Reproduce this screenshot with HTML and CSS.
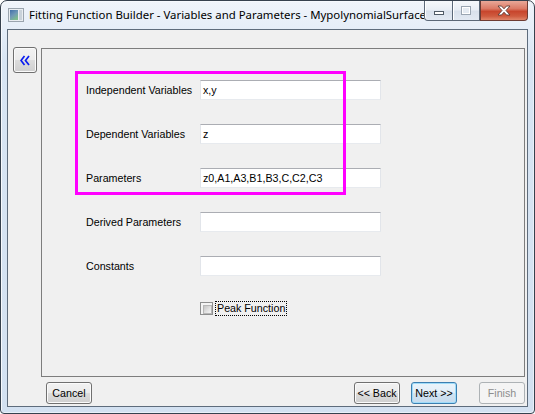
FILE: index.html
```html
<!DOCTYPE html>
<html>
<head>
<meta charset="utf-8">
<title>Fitting Function Builder</title>
<link rel="stylesheet" href="styles.css">
</head>
<body>
<div class="window">
  <div class="titlebar">
    <svg class="app-icon" width="16" height="14" viewBox="0 0 16 14">
      <defs>
        <linearGradient id="ig" x1="0" y1="0" x2="0.6" y2="1">
          <stop offset="0" stop-color="#3f6fa8"/>
          <stop offset="0.55" stop-color="#6f98b6"/>
          <stop offset="1" stop-color="#7dbb8c"/>
        </linearGradient>
      </defs>
      <rect x="0.5" y="0.5" width="15" height="13" fill="#e9edf1" stroke="#9aa4ae"/>
      <rect x="2" y="2" width="8" height="10" fill="url(#ig)"/>
      <rect x="11" y="2" width="3" height="10" fill="#c9d2da"/>
    </svg>
    <div class="title">Fitting Function Builder - Variables and Parameters - MypolynomialSurface</div>
    <div class="caption">
      <div class="cbtn min"><span class="min-glyph"></span></div>
      <div class="cbtn max"><span class="max-glyph"></span></div>
      <div class="cbtn close">
        <svg width="14" height="11" viewBox="0 0 14 11">
          <path d="M1 1 H4.5 L7 3.8 L9.5 1 H13 L9 5.5 L13 10 H9.5 L7 7.2 L4.5 10 H1 L5 5.5 Z" fill="#ffffff" stroke="#5b3a34" stroke-width="0.9" stroke-linejoin="round"/>
        </svg>
      </div>
    </div>
  </div>
  <div class="client">
    <div class="main">
      <button class="collapse" type="button">
        <svg width="10" height="11" viewBox="0 0 10 11">
          <polyline points="4.5,1 1,5.5 4.5,10" fill="none" stroke="#0a1cf0" stroke-width="1.7"/>
          <polyline points="9,1 5.5,5.5 9,10" fill="none" stroke="#0a1cf0" stroke-width="1.7"/>
        </svg>
      </button>
      <div class="panel">
        <div class="form">
          <div class="label">Independent Variables</div><div class="field">x,y</div>
          <div class="label">Dependent Variables</div><div class="field">z</div>
          <div class="label">Parameters</div><div class="field">z0,A1,A3,B1,B3,C,C2,C3</div>
          <div class="label">Derived Parameters</div><div class="field"></div>
          <div class="label">Constants</div><div class="field"></div>
        </div>
        <div class="check-row">
          <span class="checkbox"></span>
          <span class="check-label">Peak Function</span>
        </div>
        <div class="highlight"></div>
      </div>
    </div>
    <div class="footer">
      <button class="btn" type="button">Cancel</button>
      <button class="btn back" type="button">&lt;&lt; Back</button>
      <button class="btn default" type="button">Next &gt;&gt;</button>
      <button class="btn disabled" type="button">Finish</button>
    </div>
  </div>
</div>
</body>
</html>
```

FILE: styles.css
```css
* { box-sizing: border-box; }
html, body { margin: 0; padding: 0; }
body {
  width: 535px;
  height: 414px;
  overflow: hidden;
  background: #ffffff;
  font-family: "Liberation Sans", Arial, sans-serif;
  font-size: 10.7px;
  color: #000;
}

.window {
  width: 535px;
  height: 414px;
  border: 1px solid #36414e;
  border-radius: 7px 7px 4px 4px;
  background: linear-gradient(to bottom, #f0f4fa 0px, #e6eef8 26px, #d8e5f3 60px, #d3e1f1 100%);
  box-shadow: inset 1px 1px 0 #f6f9fd, inset -1px -1px 0 #e9f0f8;
  padding: 0 6px 6px 6px;
  display: flex;
  flex-direction: column;
}

.titlebar {
  height: 28px;
  display: flex;
  align-items: flex-start;
  flex: none;
}
.app-icon {
  flex: none;
  margin: 7px 0 0 1px;
}
.title {
  flex: 1;
  min-width: 0;
  white-space: nowrap;
  overflow: hidden;
  margin: 6px 0 0 5px;
  font-family: "Noto Sans", "Open Sans", sans-serif;
  font-size: 11.4px;
  line-height: 16px;
  color: #000;
}
.caption {
  flex: none;
  display: flex;
  height: 20px;
}
.cbtn {
  height: 20px;
  border: 1px solid #5b6878;
  border-top: none;
  display: flex;
  align-items: center;
  justify-content: center;
}
.cbtn.min {
  width: 29px;
  border-bottom-left-radius: 4px;
  background: linear-gradient(to bottom, #f6f8fb 0%, #e9eef5 45%, #d9e1ec 55%, #e2e9f2 100%);
  box-shadow: inset 1px 0 0 #ffffff;
}
.cbtn.max {
  width: 27px;
  border-left: none;
  background: linear-gradient(to bottom, #f6f8fb 0%, #e9eef5 45%, #d9e1ec 55%, #e2e9f2 100%);
  box-shadow: inset 1px 0 0 #ffffff;
}
.cbtn.close {
  width: 48px;
  border-color: #6d3b33;
  border-bottom-right-radius: 4px;
  background: linear-gradient(to bottom, #e9a898 0%, #dc7a66 40%, #c8462d 55%, #cf5b3f 80%, #e0866a 100%);
}
.min-glyph {
  width: 10px;
  height: 4px;
  margin-top: 5px;
  border: 1px solid #4f5a66;
  background: #ffffff;
}
.max-glyph {
  width: 10px;
  height: 9px;
  border: 1px solid #9aa5b1;
  box-shadow: inset 0 0 0 1px #ffffff;
  background: #e5ebf2;
}

.client {
  flex: 1;
  border: 1px solid #5e6c7c;
  background: #f0f0f0;
  display: flex;
  flex-direction: column;
}

.main {
  display: flex;
  align-items: flex-start;
  padding: 17px 2px 0 5px;
}
.collapse {
  flex: none;
  width: 24px;
  height: 26px;
  margin: 0 4px 0 0;
  padding: 0;
  border: 1px solid #707070;
  border-radius: 3px;
  background: linear-gradient(to bottom, #f2f2f2 0%, #ebebeb 50%, #dddddd 50%, #cfcfcf 100%);
  box-shadow: inset 0 0 0 1px #fbfbfb;
  display: flex;
  align-items: center;
  justify-content: center;
}
.panel {
  position: relative;
  flex: none;
  margin-top: 1px;
  width: 484px;
  height: 329px;
  border: 1px solid #7d7d7d;
  padding: 31px 0 0 44px;
}

.form {
  display: grid;
  grid-template-columns: 114px 181px;
  grid-auto-rows: 20px;
  row-gap: 24px;
  align-items: center;
}
.label {
  white-space: nowrap;
  line-height: 13px;
  padding-top: 1px;
}
.field {
  height: 20px;
  border: 1px solid;
  border-color: #abadb3 #e2e5ea #e7eaee #e2e5ea;
  background: #ffffff;
  padding: 0 2px;
  line-height: 18px;
  white-space: nowrap;
}

.check-row {
  display: flex;
  align-items: center;
  margin: 25px 0 0 114px;
}
.checkbox {
  position: relative;
  width: 13px;
  height: 13px;
  border: 1px solid #8e8f8f;
  background: #f4f4f4;
}
.checkbox::after {
  content: "";
  position: absolute;
  left: 2px;
  top: 2px;
  width: 7px;
  height: 7px;
  border: 1px solid #b7b7b7;
  background: linear-gradient(135deg, #c5c5c5 0%, #e4e4e4 60%, #f5f5f5 100%);
}
.check-label {
  margin-left: 2px;
  padding: 0 1px;
  border: 1px dotted #000;
  line-height: 13px;
}

.highlight {
  position: absolute;
  left: 33px;
  top: 22px;
  width: 271px;
  height: 124px;
  border: 3px solid #ff00ff;
  pointer-events: none;
}

.footer {
  display: flex;
  padding: 5px 2px 0 38px;
}
.btn {
  width: 46px;
  height: 22px;
  padding: 0;
  font-family: "Liberation Sans", Arial, sans-serif;
  font-size: 10.7px;
  color: #000;
  border: 1px solid #707070;
  border-radius: 3px;
  background: linear-gradient(to bottom, #f2f2f2 0%, #ebebeb 50%, #dddddd 50%, #cfcfcf 100%);
  box-shadow: inset 0 0 0 1px #fbfbfb;
}
.btn.back { margin-left: auto; }
.btn.default {
  margin-left: 11px;
  border-color: #3c7fb1;
  background: linear-gradient(to bottom, #eaf4fb 0%, #e2eef8 50%, #d2e3f1 50%, #c6dbee 100%);
  box-shadow: inset 0 0 0 1px #9fdcf9;
}
.btn.disabled {
  margin-left: 22px;
  color: #8d8d8d;
  border-color: #adb2b5;
  background: #f4f4f4;
  box-shadow: none;
}
```
